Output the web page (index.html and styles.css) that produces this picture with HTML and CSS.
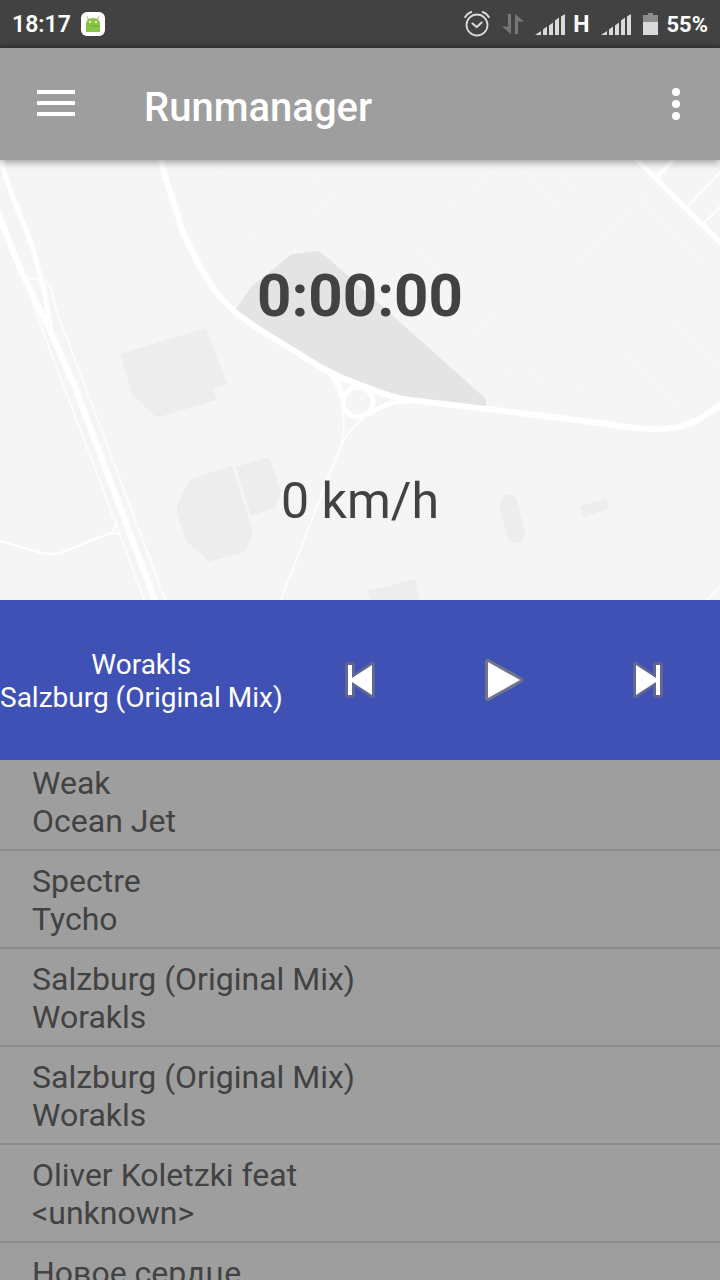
FILE: index.html
```html
<!DOCTYPE html>
<html lang="en">
<head>
<meta charset="utf-8">
<meta name="viewport" content="width=device-width, initial-scale=1">
<title>Runmanager</title>
<link rel="stylesheet" href="styles.css">
</head>
<body>
<div class="app">
  <div class="status">
    <span class="clock">18:17</span>
    <svg class="robot" width="24" height="24" viewBox="0 0 24 24" aria-hidden="true">
      <rect width="24" height="24" rx="6" fill="#fff"/>
      <path d="M6 4.500l2 3.500M18 4.500l-2 3.500" stroke="#8bc34a" stroke-width="1"/>
      <path d="M5 20V12q0-6 7-6t7 6v8z" fill="#8bc34a"/>
      <path d="M5 13h14v1.500l-5 1z" fill="#7cb342"/>
      <circle cx="9" cy="10" r="1" fill="#fff"/><circle cx="15" cy="10" r="1" fill="#fff"/>
    </svg>
    <div class="indicators">
      <svg class="alarm" width="26" height="26" viewBox="0 0 26 26" fill="none" stroke="#dadada" stroke-linecap="round" stroke-linejoin="round" aria-hidden="true">
        <circle cx="13" cy="14" r="10.500" stroke-width="1.800"/>
        <path d="M8.500 12.500l4.200 3.600 5-4.600" stroke-width="2"/>
        <path d="M1.200 6Q3 2.500 7.200 1M24.800 6Q23 2.500 18.800 1" stroke-width="2"/>
      </svg>
      <svg class="data" width="22" height="20" viewBox="0 0 22 20" fill="#777" aria-hidden="true">
        <path d="M6 0h3v20L0 12.500h6zM13 20h3V7.500h6L13 0z"/>
      </svg>
      <svg class="signal" width="30" height="21" viewBox="0 0 30 21" fill="#dadada" aria-hidden="true">
        <path d="M0 21l6-4v4zM8 15.500l4-3V21H8zM14 11.500l4-3V21h-4zM20 6.500l4-3V21h-4zM26 2.500L30 0v21h-4z"/>
      </svg>
      <span class="network">H</span>
      <svg class="signal second" width="30" height="21" viewBox="0 0 30 21" fill="#dadada" aria-hidden="true">
        <path d="M0 21l6-4v4zM8 15.500l4-3V21H8zM14 11.500l4-3V21h-4zM20 6.500l4-3V21h-4zM26 2.500L30 0v21h-4z"/>
      </svg>
      <svg class="battery" width="15" height="22" viewBox="0 0 15 22" aria-hidden="true">
        <path d="M5 0h5v2h5v8H0V2h5z" fill="#8c8c8c"/><path d="M0 9h15v13H0z" fill="#dadada"/>
      </svg>
      <span class="percent">55%</span>
    </div>
  </div>

  <header class="bar">
    <button class="icon-button menu" type="button" aria-label="Menu">
      <svg width="38" height="26" viewBox="0 0 38 26" fill="#fff"><path d="M0 0h38v4H0zM0 11h38v4H0zM0 22h38v4H0z"/></svg>
    </button>
    <h1 class="title">Runmanager</h1>
    <button class="icon-button more" type="button" aria-label="More options">
      <svg width="8" height="32" viewBox="0 0 8 32" fill="#fff"><circle cx="4" cy="4" r="4"/><circle cx="4" cy="16" r="4"/><circle cx="4" cy="28" r="4"/></svg>
    </button>
  </header>

  <main class="map">
    <svg class="map-art" viewBox="0 160 720 440" preserveAspectRatio="xMidYMid slice" fill="none" stroke="#fff" stroke-linejoin="round" aria-hidden="true">
      <g stroke="none">
        <path fill="#e4e4e4" d="M235 310L252 286 292 254 319 251 328 258 486 399V407L406 400 360 382 322 368z"/>
        <g fill="#ededed">
          <path d="M120 354L206 328 227 384 213 389 217 400 162 416 155 416 132 394z"/>
          <path d="M190 479L232 466 253 532 245 552 207 562 204 556 187 542 177 514V505z"/>
          <path d="M236 467L269 457 281 492 275 508 251 516z"/>
          <path d="M500 508q-1-10 6-13 8-2 11 5l8 32q0 9-7 11-8 0-11-8z"/>
          <path d="M580 506L606 499 609 509 583 517zM368 591L415 579 421 602H371z"/>
        </g>
      </g>
      <g stroke="#f8f8f8" stroke-width="1">
        <path d="M412 239L444 209 456 196M450 200L482 231M474 190L495 169M527 173L565 211M559 176L602 222M579 261L629 211M637 201L649 190M638 198L703 260M411 245L438 272M633 276L718 368M469 341L496 313M516 329L524 321M615 345L650 379M531 370L545 384M643 373L682 412M310 183L325 174 332 181M312 213L333 192M222 172L240 188M249 237L256 231M574 393L586 382M504 379L515 369"/>
      </g>
      <path d="M3 150V168L12 195 33 248 45 295 51 330" stroke-width="5"/>
      <path d="M-3 209L12 249 29 288 50 330 75 387 156 603" stroke-width="6"/>
      <path d="M27 279H37L46 281 51 288 56 310 82 378 166 602M28 290L52 356 90 455 145 602" stroke="#fdfdfd" stroke-width="2"/>
      <path d="M0 541L35 551Q49 556 60 553L111 533 120 534M112 532L117 523" stroke-width="2"/>
      <path d="M160 157L167 182 182 229Q196 263 212 286 225 304 236 313 252 325 270 336L322 368Q342 379 371 389 394 398 410 400L520 413 608 424Q640 430 664 429 685 427 698 420L722 404" stroke-width="6"/>
      <path d="M323 368Q338 376 342 398" stroke-width="6"/>
      <circle cx="358" cy="402" r="15" stroke-width="5"/>
      <path d="M369 414Q390 400 408 401" stroke-width="5"/>
      <path d="M342 405Q346 430 341 445M368 415Q347 430 341 446L330 473 307 532 280 602M705 602L722 584" stroke="#fdfdfd" stroke-width="2"/>
      <path d="M633 156L722 244M656 178L677 156" stroke-width="5"/>
      <path d="M687 207L722 170M704 223L722 205" stroke-width="2"/>
    </svg>
    <div class="readings">
      <div class="timer">0:00:00</div>
      <div class="speed">0 km/h</div>
    </div>
  </main>

  <section class="player" aria-label="Player">
    <div class="track"><span>Worakls</span><span>Salzburg (Original Mix)</span></div>
    <button class="control" type="button" aria-label="Previous">
      <svg width="40" height="40" viewBox="0 0 40 40"><path class="edge" d="M8 5h4v30H8zM32 5v30L11 20z"/><path d="M8 5h4v30H8zM32 5v30L12 22v-4z" fill="#fff"/></svg>
    </button>
    <button class="control" type="button" aria-label="Play">
      <svg width="40" height="44" viewBox="0 0 40 44"><path class="edge strong" d="M4 4v36l32-18z"/><path d="M4 4v36l32-18z" fill="#fff"/></svg>
    </button>
    <button class="control" type="button" aria-label="Next">
      <svg width="40" height="40" viewBox="0 0 40 40"><path class="edge" d="M28 5h4v30h-4zM8 5v30l21-15z"/><path d="M28 5h4v30h-4zM8 5v30l20-13v-4z" fill="#fff"/></svg>
    </button>
  </section>

  <div class="playlist">
    <ul class="songs">
      <li class="song"><span>Weak</span><span>Ocean Jet</span></li>
      <li class="song"><span>Spectre</span><span>Tycho</span></li>
      <li class="song"><span>Salzburg (Original Mix)</span><span>Worakls</span></li>
      <li class="song"><span>Salzburg (Original Mix)</span><span>Worakls</span></li>
      <li class="song"><span>Oliver Koletzki feat</span><span>&lt;unknown&gt;</span></li>
      <li class="song"><span lang="ru">Новое сердце</span></li>
    </ul>
  </div>
</div>
</body>
</html>
```

FILE: styles.css
```css
* {
  box-sizing: border-box;
}

body {
  margin: 0;
  font-family: Roboto, "Noto Sans", sans-serif;
  color: #424242;
}

button {
  border: 0;
  padding: 0;
  background: none;
  cursor: pointer;
}

svg {
  display: block;
}

.app {
  display: flex;
  flex-direction: column;
  height: 100vh;
  overflow: hidden;
}

.status {
  display: flex;
  align-items: center;
  flex: none;
  gap: 10px;
  height: 48px;
  padding: 0 12px;
  background: linear-gradient(#424242 42px, #383838);
  color: #fff;
  font-size: 23px;
  font-weight: 600;
  line-height: 28px;
}

.clock {
  padding-top: 2px;
}

.indicators {
  display: flex;
  align-items: center;
  margin-left: auto;
}

.data {
  margin-left: 12px;
}

.signal {
  margin-left: 11px;
}

.network {
  margin: 0 12px 0 8px;
  padding-top: 2px;
  font-weight: 700;
}

.second {
  margin-left: 0;
}

.battery {
  margin: 0 8px 0 12px;
}

.percent {
  padding-top: 2px;
  font-size: 22px;
  font-weight: 700;
}

.bar {
  position: relative;
  z-index: 1;
  display: flex;
  align-items: center;
  flex: none;
  height: 112px;
  background: #9e9e9e;
  box-shadow: 0 2px 8px rgba(0, 0, 0, 0.4);
}

.icon-button {
  display: grid;
  place-items: center;
  width: 112px;
  height: 112px;
}

.menu {
  padding-bottom: 2px;
}

.more {
  width: 88px;
  margin-left: auto;
}

.title {
  margin: 0 0 0 32px;
  padding-top: 8px;
  color: #fff;
  font-size: 40px;
  font-weight: 500;
  line-height: 48px;
}

.map {
  position: relative;
  flex: 11 1 0;
  min-height: 0;
  overflow: hidden;
  background: #f5f5f5;
}

.map-art {
  position: absolute;
  inset: 0;
  width: 100%;
  height: 100%;
}

.readings {
  position: relative;
  display: flex;
  flex-direction: column;
  align-items: center;
  justify-content: center;
  gap: 140px;
  height: 100%;
  padding-top: 32px;
}

.timer {
  font-size: 60px;
  font-weight: 700;
  line-height: 70px;
}

.speed {
  font-size: 50px;
  line-height: 60px;
}

.player {
  display: grid;
  grid-template-columns: 2fr 1fr 1fr 1fr;
  align-items: center;
  flex: none;
  min-height: 160px;
  background: #3f51b5;
}

.track {
  display: flex;
  flex-direction: column;
  justify-self: start;
  padding-top: 2px;
  color: #fff;
  font-size: 28px;
  line-height: 33px;
  text-align: center;
}

.control {
  display: grid;
  place-items: center;
  min-height: 96px;
}

.edge {
  fill: #616792;
  stroke: #616792;
  stroke-width: 6px;
  stroke-linejoin: round;
}

.strong {
  fill: #70748c;
  stroke: #70748c;
}

.playlist {
  flex: 13 1 0;
  min-height: 0;
  overflow: hidden;
  background: #9e9e9e;
}

.songs {
  margin: -7px 0 0;
  padding: 0;
  list-style: none;
}

.song {
  display: flex;
  flex-direction: column;
  padding: 11px 32px 9px;
  border-bottom: 2px solid #8b8b8b;
  font-size: 32px;
  line-height: 38px;
}
```
